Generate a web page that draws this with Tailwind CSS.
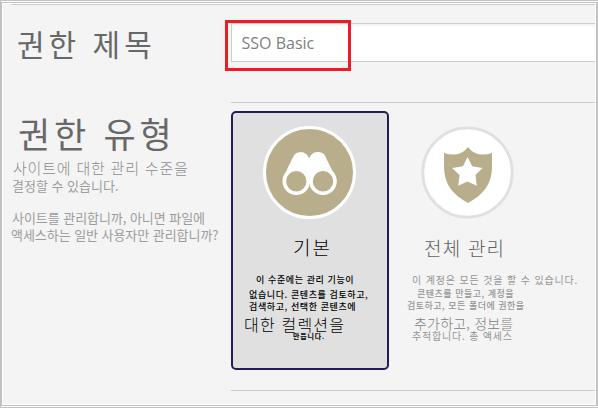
<!DOCTYPE html>
<html lang="ko">
<head>
<meta charset="utf-8">
<title>권한</title>
<script src="https://cdn.jsdelivr.net/npm/@tailwindcss/browser@4"></script>
</head>
<body class="w-[598px] h-[408px] overflow-hidden bg-[#c2c2c2] pt-px pb-px pl-px font-['Noto_Sans_CJK_KR',sans-serif]">
<div class="h-[406px] border-y border-white">
<div class="h-[404px] border-y border-[#c2c2c2] pl-px pr-[2px]">
<div class="h-[402px] border border-white bg-[#f4f4f4]">
<div class="ml-2 h-px bg-[#cccccc]"></div>
<div class="flex h-[399px] whitespace-nowrap">
  <section class="w-[228px] shrink-0 pt-[20px] text-[#9c9c9c]">
    <h1 class="h-9 pl-[14px] text-[30px] leading-9 tracking-[4px] text-[#686868]">권한 제목</h1>
    <h1 class="mt-[54px] h-9 pl-[15px] text-[35px] leading-9 tracking-[3.8px] text-[#686868]">권한 유형</h1>
    <p class="mt-[9px] h-4 pl-[10px] text-[15px] font-light leading-4 tracking-[0.8px] text-[#8c8c8c]">사이트에 대한 관리 수준을</p>
    <p class="mt-px h-[17px] pl-[9px] text-[13px] leading-[17px]">결정할 수 있습니다.</p>
    <p class="mt-[15px] h-[17px] pl-[9px] text-[13px] leading-[17px] tracking-[-0.05px]">사이트를 관리합니까, 아니면 파일에</p>
    <p class="h-[17px] pl-[8px] text-[13px] leading-[17px] tracking-[-0.05px]">액세스하는 일반 사용자만 관리합니까?</p>
  </section>
  <main class="w-[364px] shrink-0 pt-[18px]">
    <div class="relative h-[39px] border border-r-0 border-[#cccccc] bg-white pl-[9.5px] font-['Open_Sans',sans-serif] text-[16px] leading-[38px] text-[#808080] shadow-[inset_0_2px_2px_#f4f4f4]">SSO Basic
      <div class="absolute -left-[7px] -top-[4px] h-[51px] w-[126px] border-3 border-[#ed1c24]"></div>
    </div>
    <div class="mt-[40px] h-px bg-[#cccccc]"></div>
    <div class="mt-[8px] flex h-[259px]">
      <article class="w-[158px] shrink-0 rounded-[5px] border-2 border-[#221e55] bg-[#e0e0e0] pt-[13px] text-black">
        <svg class="ml-[30px] block" width="93" height="93" viewBox="263 126 93 93">
          <circle cx="309.5" cy="172.5" r="45" fill="#b8ae8b" stroke="#fff" stroke-width="3"/>
          <path d="M283.500 177L292.500 158C294 154 297 152 300.500 152C305 152 308 155 309.300 158.500C310.500 155 313 152 317.500 152C322 152 325 154 326 158L335.500 177V183H283.500Z" fill="#fff"/>
          <g fill="#b8ae8b" stroke="#fff" stroke-width="3.600"><circle cx="296.300" cy="181.200" r="12"/><circle cx="323" cy="181.200" r="12"/></g>
        </svg>
        <h2 class="mt-[18px] h-5 pl-[60px] text-[19px] font-light leading-5 tracking-[2px]">기본</h2>
        <p class="mt-[17px] h-3 pl-[23px] text-[9px] font-medium leading-3 tracking-[0.6px]">이 수준에는 관리 기능이</p>
        <p class="mt-[3px] h-3 pl-[16px] text-[9px] font-medium leading-3 tracking-[0.6px]">없습니다. 콘텐츠를 검토하고,</p>
        <p class="h-3 pl-[16px] text-[9px] font-medium leading-3 tracking-[0.6px]">검색하고, 선택한 콘텐츠에</p>
        <p class="mt-[2px] h-[18px] pl-[11px] text-[16px] font-light leading-[18px] tracking-[1.2px]">대한 컬렉션을</p>
        <p class="h-[7px] pl-[60px] text-[7px] font-bold leading-[7px] tracking-[0.8px]">만듭니다.</p>
      </article>
      <article class="pt-[15px] text-[#949494]">
        <svg class="ml-[32px] block" width="93" height="93" viewBox="421 126 93 93">
          <circle cx="467.5" cy="172.5" r="44.700" fill="#fff" stroke="#e0e0e0" stroke-width="2.800"/>
          <path d="M468 147C464 152 460 154 455 154.500Q449 155 444 153V167C444 184 453 195 468 203C483 195 492 184 492 167V153Q487 155 481 154.500C476 154 472 152 468 147Z" fill="#b8ae8b"/>
          <path d="M467.500 157L472.200 166.200L482.500 168L475.500 175L476.800 185.800L467.500 181.500L458.200 185.800L459.500 175L452 168L463 166.200Z" fill="#fff"/>
        </svg>
        <h2 class="mt-[18px] h-[21px] pl-[35px] text-[19px] font-light leading-[21px] tracking-[1.2px] text-[#606060]">전체 관리</h2>
        <p class="mt-[16px] h-3 pl-[23px] text-[10px] leading-3 tracking-[0.85px]">이 계정은 모든 것을 할 수 있습니다.</p>
        <p class="mt-[2px] h-3 pl-[28px] text-[9px] font-medium leading-3 tracking-[0.5px]">콘텐츠를 만들고, 계정을</p>
        <p class="h-3 pl-[18px] text-[9px] font-medium leading-3 tracking-[0.5px]">검토하고, 모든 폴더에 권한을</p>
        <p class="mt-[3px] h-[17px] pl-[25px] text-[14px] font-light leading-[17px] tracking-[0.2px] text-[#808080]">추가하고, 정보를</p>
        <p class="h-[8px] pl-[23px] text-[10px] leading-[8px] tracking-[0.8px]">추적합니다. 총 액세스</p>
      </article>
    </div>
    <div class="mt-[20px] h-px bg-[#cccccc]"></div>
  </main>
</div>
</div>
</div>
</div>
</body>
</html>
